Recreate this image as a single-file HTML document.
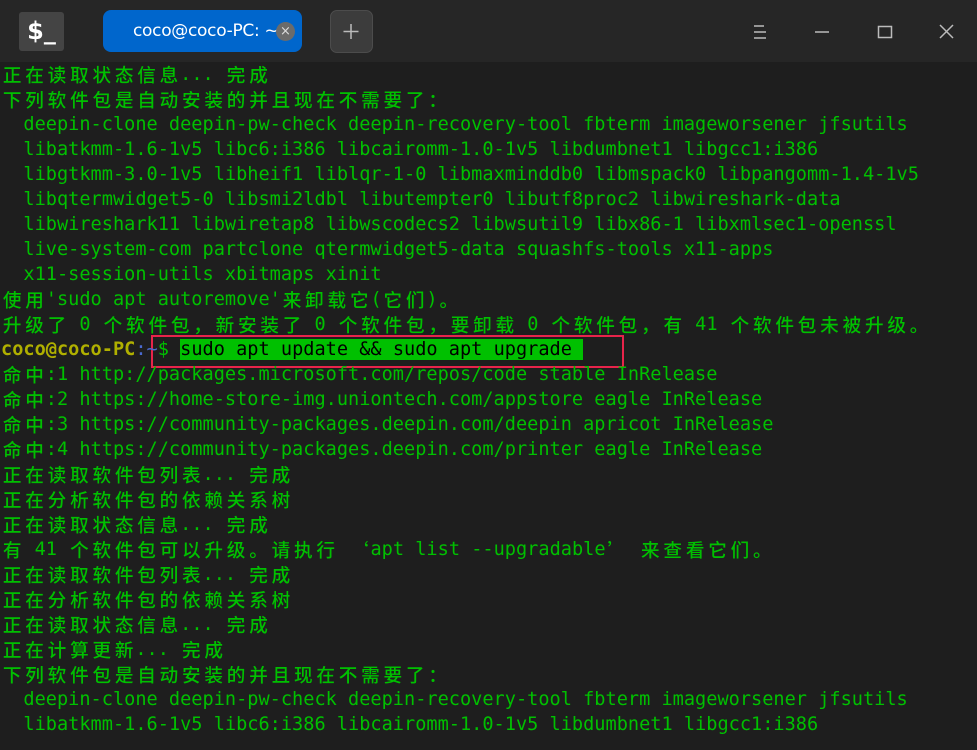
<!DOCTYPE html>
<html><head><meta charset="utf-8"><style>
html,body{margin:0;padding:0;width:977px;height:750px;overflow:hidden;background:#1e1e1e}
#tb{position:absolute;left:0;top:0;width:977px;height:62px;background:#262626}
#term{position:absolute;left:1px;top:62px;right:0;font-family:"DejaVu Sans Mono","Noto Sans CJK SC",monospace;font-size:18.6px;line-height:25px;color:#00c000;white-space:pre}
#term div{height:25px;overflow:visible}
.c{display:inline-block;width:22.4px;text-align:center;font-family:"Noto Sans CJK SC",sans-serif;font-weight:500;line-height:25px;height:25px;vertical-align:top}
.u{color:#b0b000;font-weight:bold}
.b{color:#4a6ad0}
.hl{background:#00c000;color:#000}
#box{position:absolute;left:151px;top:335px;width:469px;height:29px;border:2px solid #e8244a}
</style></head><body>
<div id="tb">
 <div style="position:absolute;left:19px;top:12px;width:45px;height:39px;background:#444;border-radius:3px;color:#fff;font:bold 24px 'DejaVu Sans',sans-serif;line-height:39px;text-align:center">$_</div>
 <div style="position:absolute;left:103px;top:10px;width:199px;height:42px;background:#0066cc;border-radius:8px;color:#fff;font:18px 'DejaVu Sans',sans-serif;line-height:42px">
  <span style="position:absolute;left:30px;font-size:17px;letter-spacing:-0.3px">coco@coco-PC: ~</span>
  <span style="position:absolute;left:173px;top:12px;width:19px;height:19px;border-radius:50%;background:#6b6b6b;color:#ddd;font-size:13px;line-height:19px;text-align:center">×</span>
 </div>
 <div style="position:absolute;left:330px;top:10px;width:41px;height:41px;background:#3c3c3c;border:1px solid #4c4c4c;border-radius:7px"></div>
 <svg style="position:absolute;left:0;top:0" width="977" height="62" stroke="#bbb" stroke-width="1.5" fill="none">
  <path d="M351 24v15M343.5 31.5h15"/>
  <path d="M754 26h10M754 32h12M754 38h12"/>
  <path d="M815 32h14"/>
  <rect x="878.5" y="26.5" width="13" height="11"/>
  <path d="M940 25l13 13M953 25l-13 13"/>
 </svg>
</div>
<div id="box"></div>
<div id="term">正在读取状态信息... 完成
下列软件包是自动安装的并且现在不需要了：
  deepin-clone deepin-pw-check deepin-recovery-tool fbterm imageworsener jfsutils
  libatkmm-1.6-1v5 libc6:i386 libcairomm-1.0-1v5 libdumbnet1 libgcc1:i386
  libgtkmm-3.0-1v5 libheif1 liblqr-1-0 libmaxminddb0 libmspack0 libpangomm-1.4-1v5
  libqtermwidget5-0 libsmi2ldbl libutempter0 libutf8proc2 libwireshark-data
  libwireshark11 libwiretap8 libwscodecs2 libwsutil9 libx86-1 libxmlsec1-openssl
  live-system-com partclone qtermwidget5-data squashfs-tools x11-apps
  x11-session-utils xbitmaps xinit
使用'sudo apt autoremove'来卸载它(它们)。
升级了 0 个软件包，新安装了 0 个软件包，要卸载 0 个软件包，有 41 个软件包未被升级。
<span class="u">coco@coco-PC</span><span class="b">:~</span>$ <span class="hl">sudo apt update &amp;&amp; sudo apt upgrade </span>
命中:1 http://packages.microsoft.com/repos/code stable InRelease
命中:2 https://home-store-img.uniontech.com/appstore eagle InRelease
命中:3 https://community-packages.deepin.com/deepin apricot InRelease
命中:4 https://community-packages.deepin.com/printer eagle InRelease
正在读取软件包列表... 完成
正在分析软件包的依赖关系树
正在读取状态信息... 完成
有 41 个软件包可以升级。请执行 ‘apt list --upgradable’ 来查看它们。
正在读取软件包列表... 完成
正在分析软件包的依赖关系树
正在读取状态信息... 完成
正在计算更新... 完成
下列软件包是自动安装的并且现在不需要了：
  deepin-clone deepin-pw-check deepin-recovery-tool fbterm imageworsener jfsutils
  libatkmm-1.6-1v5 libc6:i386 libcairomm-1.0-1v5 libdumbnet1 libgcc1:i386</div>
<script>
(function(){
 var re=/[\u3000-\u9fff\uff00-\uffef\u2018\u2019]/;
 function walk(n){
  if(n.nodeType===3){
   var t=n.nodeValue;if(!re.test(t))return;
   var f=document.createDocumentFragment(),buf='';
   for(var i=0;i<t.length;i++){var ch=t[i];
    if(re.test(ch)){if(buf){f.appendChild(document.createTextNode(buf));buf='';}
     var s=document.createElement('span');s.className='c';s.textContent=ch;f.appendChild(s);}
    else buf+=ch;}
   if(buf)f.appendChild(document.createTextNode(buf));
   n.parentNode.replaceChild(f,n);
  }else{var k=Array.prototype.slice.call(n.childNodes);k.forEach(walk);}
 }
 var term=document.getElementById('term');
 walk(term);
 var lines=term.innerHTML.split('\n');
 term.innerHTML=lines.map(function(l){return '<div>'+(l||' ')+'</div>';}).join('');
})();
</script>
</body></html>
